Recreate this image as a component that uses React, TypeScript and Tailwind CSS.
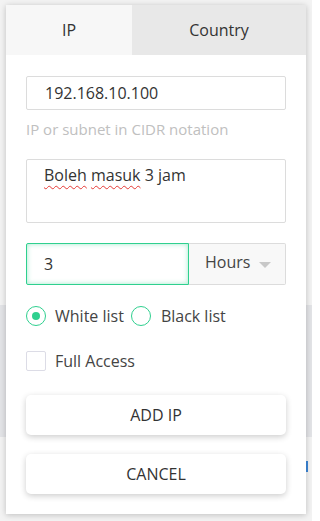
import { useState } from "react";

export default function App() {
  const [tab, setTab] = useState<"ip" | "country">("ip");
  const [ip, setIp] = useState("192.168.10.100");
  const [duration, setDuration] = useState("3");
  const [list, setList] = useState<"white" | "black">("white");
  const [fullAccess, setFullAccess] = useState(false);

  return (
    <div
      className="relative w-[312px] h-[521px] bg-[#f3f3f3] overflow-hidden"
      style={{ fontFamily: '"Open Sans", "Noto Sans", sans-serif' }}
    >
      {/* page behind the dialog */}
      <div className="flex flex-col pt-[305px]">
        <div className="h-[132px] bg-[#e3e4e7]" />
      </div>
      <div className="absolute left-[306px] top-[461px] w-[2px] h-[11px] bg-[#3b86d8]" />

      {/* Dialog */}
      <div className="absolute left-[6px] top-[5px] w-[300px] h-[509px] bg-white shadow-[0_1px_6px_rgba(0,0,0,0.22)] flex flex-col">
        {/* Tabs */}
        <div className="flex h-[50px] shrink-0">
          <button
            onClick={() => setTab("ip")}
            className={`w-[126px] flex items-center justify-center text-[16px] text-[#333] ${
              tab === "ip" ? "bg-[#f7f7f7]" : "bg-[#e8e8e8]"
            }`}
          >
            IP
          </button>
          <button
            onClick={() => setTab("country")}
            className={`flex-1 flex items-center justify-center text-[16px] text-[#333] ${
              tab === "country" ? "bg-[#f7f7f7]" : "bg-[#e8e8e8]"
            }`}
          >
            Country
          </button>
        </div>

        <div className="px-[20px] pt-[21px] flex flex-col">
          {/* IP */}
          <input
            value={ip}
            onChange={(e) => setIp(e.target.value)}
            className="h-[34px] w-full border border-[#dcdcdc] rounded-[2px] px-[18px] text-[16px] text-[#333] outline-none"
          />
          <p className="mt-[9px] text-[15px] text-[#c0c0c0] leading-[20px]">IP or subnet in CIDR notation</p>

          {/* Note */}
          <div className="mt-[20px] h-[64px] w-full border border-[#dcdcdc] rounded-[2px] px-[17px] pt-[3px] text-[16px] text-[#333] leading-[24px]">
            <span className="underline decoration-wavy decoration-[#e53935] decoration-[1px] underline-offset-[4px]">Boleh</span>{" "}
            <span className="underline decoration-wavy decoration-[#e53935] decoration-[1px] underline-offset-[4px]">masuk</span> 3 jam
          </div>

          {/* Duration */}
          <div className="mt-[20px] flex h-[42px]">
            <input
              value={duration}
              onChange={(e) => setDuration(e.target.value)}
              className="w-[163px] h-full border border-[#2fd08f] rounded-l-[2px] px-[17px] text-[16px] text-[#333] outline-none shadow-[inset_0_0_5px_rgba(47,208,143,0.45)]"
            />
            <div className="flex-1 h-full border border-l-0 border-[#dcdcdc] rounded-r-[2px] bg-[#f8f8f8] flex items-center pl-[16px] pb-[4px] gap-[9px] text-[16px] text-[#444]">
              <span>Hours</span>
              <svg width="12" height="7" viewBox="0 0 12 7" className="mt-[6px]">
                <path d="M0 0 L12 0 L6 6 Z" fill="#c8c8c8" />
              </svg>
            </div>
          </div>

          {/* List type */}
          <div className="mt-[21px] flex items-center h-[20px] text-[16px] text-[#444]">
            <button onClick={() => setList("white")} className="flex items-center">
              <span className="w-[20px] h-[20px] rounded-full border-[1.5px] border-[#2fd08f] flex items-center justify-center">
                {list === "white" && <span className="w-[8px] h-[8px] rounded-full bg-[#2fd08f]" />}
              </span>
              <span className="ml-[9px]">White list</span>
            </button>
            <button onClick={() => setList("black")} className="flex items-center ml-[7px]">
              <span className="w-[20px] h-[20px] rounded-full border-[1.5px] border-[#2fd08f] flex items-center justify-center">
                {list === "black" && <span className="w-[8px] h-[8px] rounded-full bg-[#2fd08f]" />}
              </span>
              <span className="ml-[10px]">Black list</span>
            </button>
          </div>

          {/* Full access */}
          <button onClick={() => setFullAccess(!fullAccess)} className="mt-[25px] flex items-center h-[20px] text-[16px] text-[#444]">
            <span className="w-[20px] h-[20px] border border-[#dcdce6] rounded-[2px] flex items-center justify-center">
              {fullAccess && (
                <svg width="12" height="10" viewBox="0 0 12 10">
                  <path d="M1 5 L4.5 8.5 L11 1.5" stroke="#2fd08f" strokeWidth="2" fill="none" />
                </svg>
              )}
            </span>
            <span className="ml-[9px]">Full Access</span>
          </button>

          {/* Actions */}
          <button className="mt-[24px] h-[40px] w-full rounded-[5px] bg-white shadow-[0_2px_6px_rgba(0,0,0,0.2)] text-[16px] text-[#333]">
            ADD IP
          </button>
          <button className="mt-[19px] h-[40px] w-full rounded-[5px] bg-white shadow-[0_2px_6px_rgba(0,0,0,0.2)] text-[16px] text-[#333]">
            CANCEL
          </button>
        </div>
      </div>
    </div>
  );
}
